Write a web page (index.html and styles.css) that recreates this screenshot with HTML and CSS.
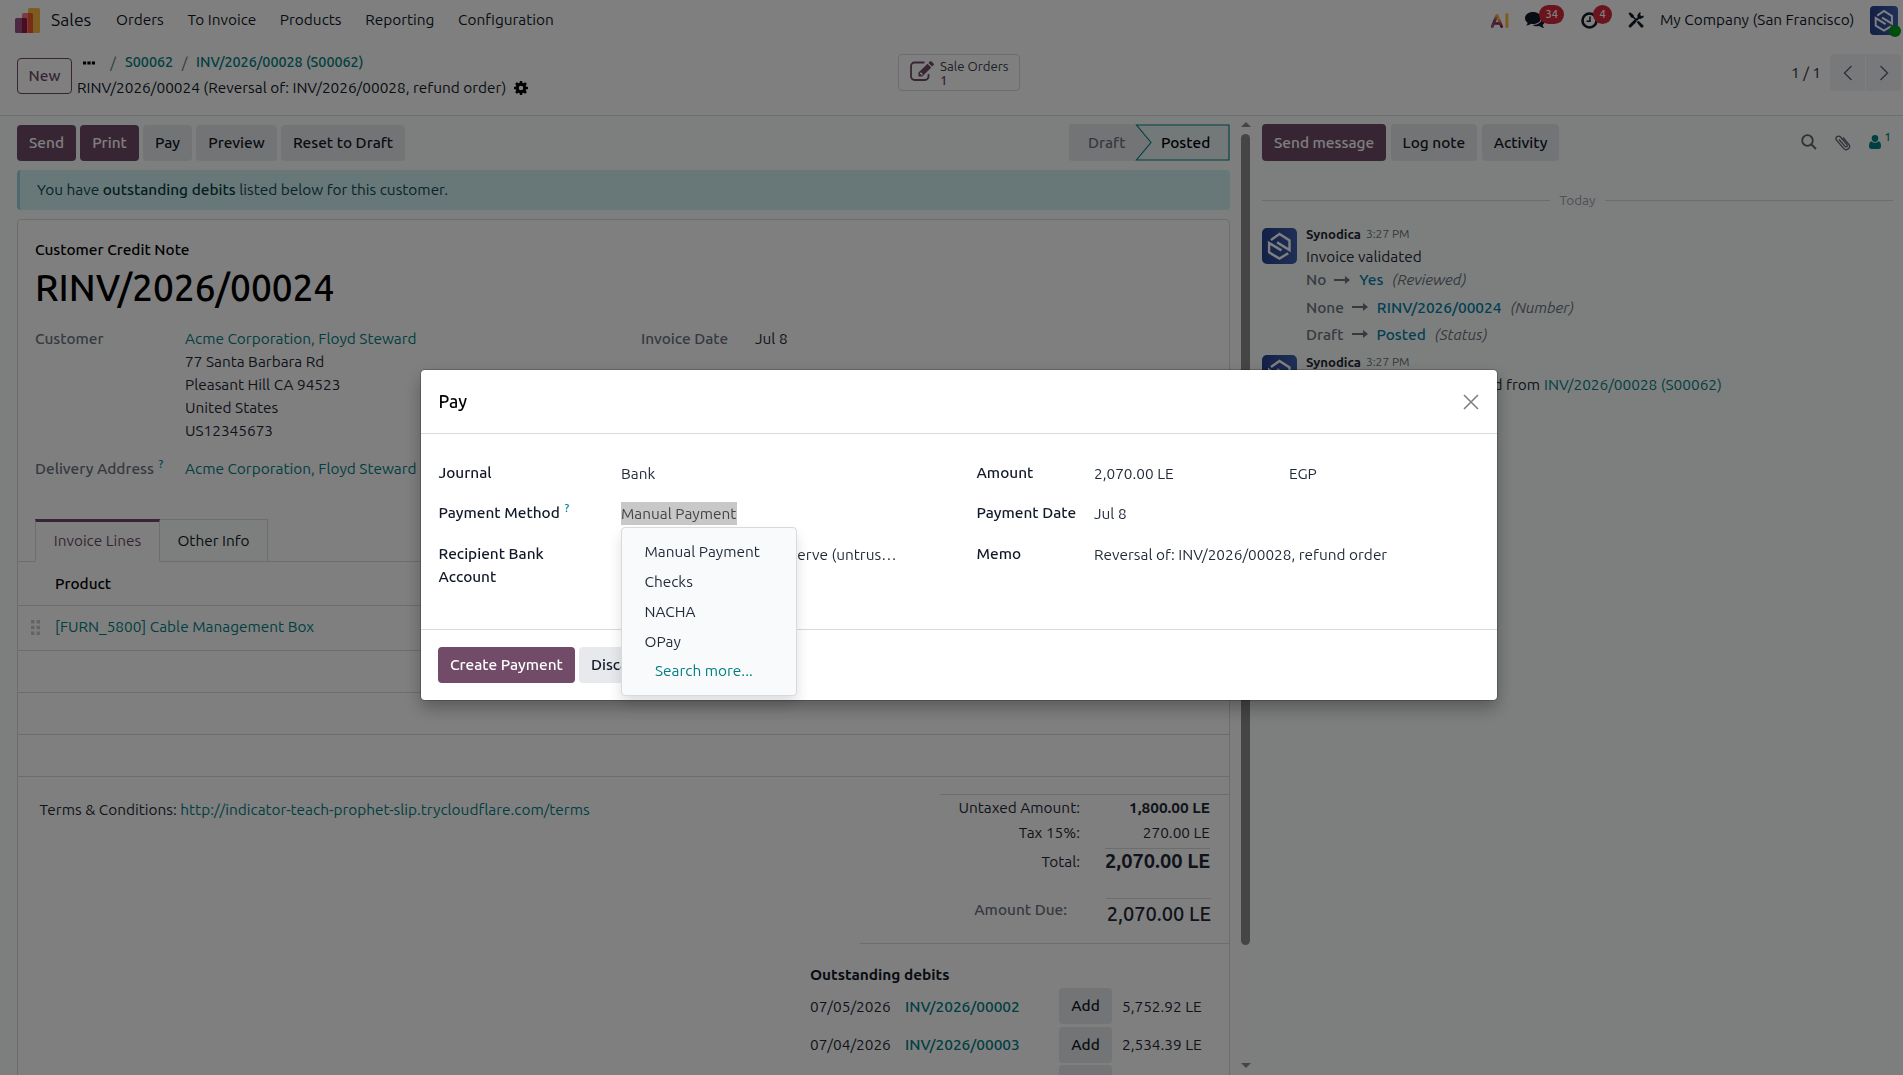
FILE: index.html
```html
<!DOCTYPE html>
<html lang="en">
<head>
<meta charset="utf-8">
<title>Sales - RINV/2026/00024</title>
<link rel="stylesheet" href="styles.css">
</head>
<body>
<svg class="defs" width="0" height="0">
  <defs>
    <linearGradient id="avatar-bg" x1="0" y1="0" x2="1" y2="0"><stop offset="0" stop-color="#26408e"/><stop offset="1" stop-color="#3f5fae"/></linearGradient>
    <linearGradient id="ai-left" x1="0" y1="1" x2="0" y2="0"><stop offset="0" stop-color="#985184"/><stop offset=".55" stop-color="#8c3a6c"/><stop offset="1" stop-color="#fbb945"/></linearGradient>
    <linearGradient id="ai-right" x1="0" y1="1" x2="0" y2="0"><stop offset="0" stop-color="#8e1d5a"/><stop offset=".4" stop-color="#c9603c"/><stop offset=".7" stop-color="#fbb945"/></linearGradient>
    <symbol id="avatar" viewBox="0 0 36 36" preserveAspectRatio="none">
      <rect width="36" height="36" rx="5" fill="url(#avatar-bg)"/>
      <g fill="none" stroke="#fff" stroke-width="2.500">
        <path d="M9.200 12 18 6 28.300 12.500V22L15.500 14.400"/>
        <path d="M27 25.200 18 30.600 7.300 24.400V15L20 22.400"/>
      </g>
    </symbol>
    <symbol id="arrow" viewBox="0 0 16 10"><path d="M0 4h11V1l5 4-5 4V6H0z"/></symbol>
  </defs>
</svg>

<header class="navbar">
  <svg class="logo" viewBox="0 0 25 25"><rect x="13" y="0" width="12" height="25" rx="1.6" fill="#fbb945"/><rect x="7" y="5" width="11" height="20" rx="1.6" fill="#f9787a"/><path d="M13 5h3.4Q18 5 18 6.6V25h-5z" fill="#f0562a"/><rect x="0" y="10" width="12" height="15" rx="1.6" fill="#985184"/><path d="M7 10h3.4Q12 10 12 11.600V25H7z" fill="#8e1d46"/></svg>
  <span class="app">Sales</span>
  <nav class="menu"><a>Orders</a><a>To Invoice</a><a>Products</a><a>Reporting</a><a>Configuration</a></nav>
  <div class="systray">
    <svg class="ai" viewBox="0 0 19 17"><g fill="none" stroke-width="3" stroke-linecap="round"><path d="M5 11.500h5" stroke="#7d2a5c" stroke-width="2.400"/><path d="M7.200 3.500 11.600 14.500" stroke="url(#ai-right)"/><path d="M2.300 14.500 6.800 3.500" stroke="url(#ai-left)"/><path d="M16.900 2.500v12" stroke="#fbb945"/></g></svg>
    <span class="tray chat"><svg viewBox="0 0 20 17"><path d="M8 0c4.600 0 8 2.600 8 6s-3.400 6-8 6c-.8 0-1.500 0-2.200-.2C4.600 12.800 3.200 13.400 1 13.500c1-.9 1.500-1.800 1.600-2.800C1 9.600 0 7.900 0 6c0-3.400 3.600-6 8-6z"/><path d="M17.300 4.500C19 5.600 20 7 20 8.800c0 1.700-.9 3.200-2.400 4.200.2 1.100.7 2 1.700 3-2.200-.1-3.700-.8-4.900-1.900-2.700.5-5.200 0-7-1.100 5.500.2 10-2.700 9.900-8.500z"/></svg><b class="badge">34</b></span>
    <span class="tray clock"><svg viewBox="0 0 17 17"><circle cx="8.500" cy="8.500" r="7" fill="none" stroke="#111827" stroke-width="2.600"/><path d="M9 4.500V9.300H5.600" fill="none" stroke="#111827" stroke-width="1.500"/></svg><b class="badge">4</b></span>
    <svg class="tools" viewBox="0 0 16 16"><path d="M2.200 14 7 9.200" stroke="#111827" stroke-width="3" stroke-linecap="round"/><path d="M8 8.200 11 5.500" stroke="#111827" stroke-width="2.200"/><path d="M11.200 0.600 9.300 3.400l.6 2.700 2.400.8 3.100-1.500.4-2-2.300.8-1.400-1.400.8-2.300z"/><path d="M.5 1.600 2 .2l3.600 2.700.4 1.900 2.600 2.500-1 1L5 5.900l-1.900-.5z"/><path d="M8.800 10.200l1.600-1.500 4.900 4.500c.8 1.500-1 2.900-2.300 2.200z"/></svg>
    <span class="company">My Company (San Francisco)</span>
    <span class="me"><svg><use href="#avatar"/></svg><i></i></span>
  </div>
</header>

<section class="panel">
  <button class="btn outline">New</button>
  <div class="crumbs">
    <div class="crumb-top"><svg class="dots" viewBox="0 0 12 4"><path d="M0 .5h3.200v3H0zM4.400 .5h3.200v3H4.400zM8.800 .5H12v3H8.800z"/></svg><i>/</i><a>S00062</a><i class="next">/</i><a>INV/2026/00028 (S00062)</a></div>
    <div class="crumb-now"><span>RINV/2026/00024 (Reversal of: INV/2026/00028, refund order)</span>
      <svg viewBox="0 0 14 14"><path fill-rule="evenodd" d="M5.900 0h2.200l.4 1.900 1 .4L11.200 1.200l1.600 1.600-1.100 1.700.4 1 1.900.4v2.200l-1.900.4-.4 1 1.100 1.700-1.600 1.600-1.700-1.100-1 .4-.4 1.900H5.900l-.4-1.900-1-.4-1.700 1.100-1.600-1.600 1.100-1.700-.4-1L0 8.100V5.900l1.900-.4.4-1L1.200 2.800l1.600-1.600 1.700 1.100 1-.4zM7 4.700a2.300 2.300 0 1 0 0 4.600 2.300 2.300 0 0 0 0-4.600z"/></svg></div>
  </div>
  <div class="stat">
    <svg viewBox="0 0 24 20"><path d="M14.500 1.500H4.500a3.500 3.500 0 0 0-3.500 3.500v10.500A3.500 3.500 0 0 0 4.500 19H15a3.500 3.500 0 0 0 3.500-3.500V13" fill="none" stroke="#714b67" stroke-width="1.800"/><path fill-rule="evenodd" d="M8.500 11.500 17.500 2.800l3.800 3.700-9 8.900H8.500zM10 12v1.100h1.100v1.100h.9l1-.9-2.100-2.100z" fill="#714b67"/><path d="M18.400 2 19.800.6q.9-.9 1.800 0l1.900 1.900q.8.900 0 1.700l-1.400 1.400z" fill="#714b67"/></svg>
    <div class="stat-text"><span>Sale Orders</span><b>1</b></div>
  </div>
  <div class="pager"><span>1 / 1</span>
    <div class="pg"><svg viewBox="0 0 10 16"><path d="M8.500 1 1.500 8l7 7"/></svg></div><div class="pg"><svg viewBox="0 0 10 16"><path d="M1.500 1l7 7-7 7"/></svg></div>
  </div>
</section>

<main class="content">
  <div class="form">
    <div class="statusbar">
      <button class="btn primary">Send</button><button class="btn primary">Print</button><button class="btn">Pay</button><button class="btn">Preview</button><button class="btn">Reset to Draft</button>
      <div class="steps">
        <svg viewBox="0 0 161 37"><path d="M3 0h65l15 18.500L68 37H3a3 3 0 0 1-3-3V3a3 3 0 0 1 3-3z" fill="#e7e9ed"/><path d="M67.500 1H160v35H67.500L82 18.500z" fill="#e6f2f3" stroke="#017e84" stroke-width="1.100"/></svg>
        <span class="draft">Draft</span><span class="posted">Posted</span>
      </div>
    </div>
    <div class="alert">You have <b>outstanding debits</b> listed below for this customer.</div>
    <article class="sheet">
      <div class="doc-type">Customer Credit Note</div>
      <h1>RINV/2026/00024</h1>
      <div class="groups">
        <div class="row cust"><label>Customer</label><div><a>Acme Corporation, Floyd Steward</a><p>77 Santa Barbara Rd</p><p>Pleasant Hill CA 94523</p><p>United States</p><p>US12345673</p></div></div>
        <div class="row date"><label>Invoice Date</label><div>Jul 8</div></div>
      </div>
      <div class="row deliv"><label>Delivery Address <sup>?</sup></label><a>Acme Corporation, Floyd Steward</a></div>
      <div class="tabs"><span class="tab on">Invoice Lines</span><span class="tab">Other Info</span></div>
      <div class="lines">
        <div class="line head">Product</div>
        <div class="line item"><svg viewBox="0 0 9 15"><path d="M0 0h3.500v3.500H0zM5.500 0H9v3.500H5.500zM0 5.700h3.500v3.500H0zM5.500 5.700H9v3.500H5.500zM0 11.400h3.500v3.500H0zM5.500 11.400H9v3.500H5.500z"/></svg><a>[FURN_5800] Cable Management Box</a></div>
        <div class="line"></div><div class="line"></div><div class="line"></div>
      </div>
      <div class="bottom">
        <p class="terms">Terms &amp; Conditions: <a>http://indicator-teach-prophet-slip.trycloudflare.com/terms</a></p>
        <div class="totals">
          <div class="t"><span>Untaxed Amount:</span><b>1,800.00 LE</b></div>
          <div class="t tax"><span>Tax 15%:</span><em>270.00 LE</em></div>
          <div class="t grand"><span>Total:</span><b>2,070.00 LE</b></div>
          <div class="t due"><span>Amount Due:</span><b>2,070.00 LE</b></div>
        </div>
      </div>
      <div class="debits">
        <h2>Outstanding debits</h2>
        <div class="debit"><span>07/05/2026</span><a>INV/2026/00002</a><button class="btn">Add</button><span>5,752.92 LE</span></div>
        <div class="debit"><span>07/04/2026</span><a>INV/2026/00003</a><button class="btn">Add</button><span>2,534.39 LE</span></div>
        <div class="debit"><span></span><a></a><button class="btn"></button><span></span></div>
      </div>
    </article>
  </div>
  <div class="scroll"><i class="up"></i><i class="thumb"></i><i class="down"></i></div>
  <aside class="chatter">
    <div class="chat-top">
      <button class="btn primary">Send message</button><button class="btn">Log note</button><button class="btn">Activity</button>
      <div class="chat-icons">
        <svg class="i-search" viewBox="0 0 16 16"><circle cx="6.500" cy="6.500" r="5.300"/><path d="M10.500 10.500 15 15"/></svg>
        <svg class="i-clip" viewBox="0 0 17 17"><path d="M5 5.500 11 12.400a1.300 1.300 0 0 0 2-1.800L6.500 3A2.600 2.600 0 0 0 2.300 6L9.800 14.600a3.300 3.300 0 0 0 5-4.300L9 3.500"/></svg>
        <svg class="i-user" viewBox="0 0 12 14"><path d="M6 0a3.300 3.300 0 0 1 3.300 3.400C9.300 5.300 7.800 7 6 7S2.700 5.300 2.700 3.400A3.300 3.300 0 0 1 6 0zM2.700 6.300C3.600 7.300 4.700 7.800 6 7.800s2.400-.5 3.300-1.500C11.300 6.500 12 8.500 12 11c0 1.700-1 3-2.500 3h-7C1 14 0 12.700 0 11c0-2.500.7-4.500 2.700-4.700z"/></svg><span class="followers">1</span>
      </div>
    </div>
    <div class="day"><span>Today</span></div>
    <div class="msg first">
      <svg class="avatar"><use href="#avatar"/></svg>
      <div class="msg-body">
        <div class="who"><b>Synodica</b><span>3:27 PM</span></div>
        <p class="txt">Invoice validated</p>
        <div class="track t1"><span>No</span><svg><use href="#arrow"/></svg><b>Yes</b><em>(Reviewed)</em></div>
        <div class="track t2"><span>None</span><svg><use href="#arrow"/></svg><b>RINV/2026/00024</b><em>(Number)</em></div>
        <div class="track t3"><span>Draft</span><svg><use href="#arrow"/></svg><b>Posted</b><em>(Status)</em></div>
      </div>
    </div>
    <div class="msg">
      <svg class="avatar"><use href="#avatar"/></svg>
      <div class="msg-body">
        <div class="who"><b>Synodica</b><span>3:27 PM</span></div>
        <p class="txt made"><span>This entry has been reversed from</span><a>INV/2026/00028 (S00062)</a></p>
      </div>
    </div>
  </aside>
</main>

<div class="backdrop">
  <div class="modal" role="dialog">
    <div class="m-head"><span>Pay</span><svg viewBox="0 0 16 16"><path d="M1 1l14 14M15 1 1 15"/></svg></div>
    <div class="m-body">
      <div class="m-col">
        <div class="f"><label>Journal</label><span>Bank</span></div>
        <div class="f"><label>Payment Method <sup>?</sup></label>
          <div class="select"><span class="selected">Manual Payment</span>
            <div class="dropdown"><span>Manual Payment</span><span>Checks</span><span>NACHA</span><span>OPay</span><a>Search more...</a></div>
          </div></div>
        <div class="f"><label>Recipient Bank Account</label><span class="bank">Reserve (untrus…</span></div>
      </div>
      <div class="m-col right">
        <div class="f"><label>Amount</label><span class="amount">2,070.00 LE</span><span>EGP</span></div>
        <div class="f"><label>Payment Date</label><span>Jul 8</span></div>
        <div class="f"><label>Memo</label><span>Reversal of: INV/2026/00028, refund order</span></div>
      </div>
    </div>
    <div class="m-foot"><button class="btn primary">Create Payment</button><button class="btn">Discard</button></div>
  </div>
</div>
</body>
</html>
```
FILE: styles.css
```css
* { box-sizing: border-box; }
body {
  margin: 0; width: 1903px; height: 1075px; overflow: hidden; background: #fff; color: #1f2937;
  font: 15.4px/23px Ubuntu, "Noto Sans", sans-serif;
}
p, h1, h2 { margin: 0; font-weight: 400; }
a { color: #017e84; }
i, em { font-style: normal; }
svg { flex: none; display: block; }
.defs { position: absolute; }
b { font-weight: 500; }

.btn {
  height: 36px; padding: 0 12px; border: 0; border-radius: 4px; background: #e7e9ed; color: #111827;
  font: 500 15.4px/34px Ubuntu, "Noto Sans", sans-serif; flex: none; white-space: nowrap;
}
.btn.primary { background: #714b67; color: #fff; }
.btn.outline { background: none; border: 1px solid #714b67; color: #714b67; }

/* top bar */
.navbar { display: flex; align-items: center; height: 40px; padding: 0 5px 0 15px; color: #111827; }
.logo { width: 25px; height: 25px; }
.app { width: 65px; padding-left: 11px; font-size: 17.6px; margin-top: -1px; }
.menu { display: flex; margin-top: -1px; }
.menu a { color: inherit; padding: 0 11.8px; }
.menu a:first-child { padding-left: 11px; }
.systray { display: flex; align-items: center; margin-left: auto; }
.ai { width: 19px; height: 17px; margin-right: 16px; }
.tray { position: relative; }
.tray.chat { width: 56px; }
.tray.clock { width: 47px; }
.tray svg { height: 17px; fill: #111827; }
.chat svg { width: 20px; }
.clock svg { width: 17px; }
.badge {
  position: absolute; top: -7px; left: 14px; min-width: 19px; height: 19px; padding: 0 6.5px; border-radius: 10px;
  background: #d5293a; color: #fff; font-size: 11px; line-height: 18px;
}
.clock .badge { left: 12px; }
.tools { width: 16px; height: 16px; fill: #111827; }
.company { width: 226px; padding-left: 16px; white-space: nowrap; margin-top: -1px; }
.me { position: relative; width: 28px; height: 29px; }
.me svg { width: 28px; height: 29px; }
.me i { position: absolute; right: -3px; bottom: -2px; width: 12px; height: 12px; border-radius: 50%; background: #009a1c; }

/* control panel */
.panel { display: flex; height: 76px; padding: 0 2px 0 17px; border-bottom: 1px solid #d8dadd; }
.panel .outline { width: 55px; margin: 18px 5px 0 0; padding: 0; }
.crumbs { width: 821px; padding-top: 10px; color: #111827; }
.crumb-top { display: flex; align-items: center; height: 23px; padding-left: 6px; font-size: 14.3px; font-weight: 500; }
.crumb-top a, .crumb-top i { margin-top: 1px; }
.crumb-top i { width: 24px; text-align: center; color: #6b7280; font-size: 15.4px; font-weight: 400; }
.crumb-top .next { width: 23px; }
.dots { width: 12px; height: 4px; margin: 3px 6px 0 0; }
.crumb-now { display: flex; align-items: center; gap: 8px; height: 28px; }
.crumb-now svg { width: 14px; height: 14px; margin-top: 1px; }
.stat { display: flex; width: 122px; height: 37px; margin-top: 14px; padding: 6px 0 0 11px; border: 1px solid #d8dadd; border-radius: 4px; }
.stat svg { width: 24px; height: 20px; }
.stat-text { display: flex; flex-direction: column; padding-left: 6px; font-size: 13.2px; line-height: 14px; color: #374151; margin-top: -2px; }
.stat-text b { color: #714b67; }
.pager { display: flex; margin: 14px 0 0 auto; line-height: 37px; }
.pager span { margin-right: 8px; }
.pg { display: grid; place-items: center; width: 35px; height: 37px; margin-left: 1px; background: #f1f3f6; border-radius: 4px 0 0 4px; }
.pg + .pg { border-radius: 0 4px 4px 0; }
.pg svg { width: 10px; height: 16px; fill: none; stroke: #5c6470; stroke-width: 1.4; }

/* form */
.content { display: flex; height: 959px; background: #f9fefb; overflow: hidden; }
.form { width: 1237px; padding: 8px 7px 0 17px; }
.statusbar { display: flex; gap: 4.2px; height: 46px; padding-top: 1px; }
.steps { position: relative; display: flex; width: 161px; height: 37px; margin: -1px 0 0 auto; font-weight: 500; line-height: 37px; }
.steps svg { position: absolute; inset: 0; width: 161px; height: 37px; }
.steps span { position: relative; }
.draft { width: 92px; padding-left: 19px; color: #6b7280; }
.posted { color: #000; }
.alert { height: 40px; padding: 0 17px; line-height: 39px; border-left: 3px solid #9bd5dd; border-radius: 4px; background: #d1eeee; color: #0c4a52; }
.alert b { color: #063c43; }
.sheet { height: 900px; margin-top: 9px; border: 1px solid #d8dadd; border-radius: 4px; background: #fff; }
.doc-type { padding: 18px 0 0 17px; font-weight: 500; color: #000; }
h1 { padding-left: 17px; height: 66px; font-size: 37px; line-height: 53px; font-weight: 500; color: #000; }
.groups { display: flex; }
.row { display: flex; padding-left: 17px; }
.row label { width: 150px; font-weight: 500; color: #6b7280; }
.cust { width: 606px; height: 130px; }
.row.date label { width: 114px; }
sup { font-size: 11.5px; font-weight: 500; line-height: 0; vertical-align: 6px; margin-left: 1px; color: #0180a5; }
.tabs { display: flex; height: 43px; margin-top: 39px; padding-left: 17px; border-bottom: 1px solid #d8dadd; }
.tab { height: 43px; width: 108px; border: 1px solid #d8dadd; border-left: 0; background: #f9fefb; text-align: center; line-height: 42px; color: #111827; }
.tab.on { width: 125px; border-top: 3px solid #714b67; border-left: 1px solid #d8dadd; border-bottom-color: #fff; background: #fff; color: #714b67; line-height: 38px; }
.line { display: flex; align-items: center; height: 42px; border-bottom: 1px solid #d8dadd; }
.head { height: 44px; padding-left: 37px; font-weight: 500; color: #000; }
.item { height: 45px; padding: 0 0 2px 13px; }
.item svg { width: 9px; height: 15px; margin-right: 15px; fill: #c5c9ce; }
.item a { margin-top: -1px; }
.bottom { display: flex; justify-content: space-between; padding-top: 17px; }
.terms { padding: 4px 0 0 21.5px; }
.totals { width: 289px; height: 149px; border-top: 1px solid #d8dadd; }
.t { display: flex; justify-content: flex-end; height: 25px; line-height: 26px; padding-right: 19px; }
.t span { margin-right: 25px; }
.t b, .t em { width: 105px; text-align: right; }
.t b { font-weight: 600; color: #1f2937; }
.tax { height: 28px; }
.grand b, .due b { border-top: 1px solid #d8dadd; font-size: 20px; white-space: nowrap; }
.grand { height: 50px; }
.grand span { line-height: 27px; }
.grand b { line-height: 24px; }
.due span { margin-right: 39px; font-weight: 500; color: #6b7280; line-height: 23px; }
.due b { font-weight: 500; line-height: 29px; margin-right: -1px; height: 40px; }
.debits { margin-left: 842px; border-top: 1px solid #d8dadd; }
.debits h2 { padding: 19px 0 1px; margin-left: -50px; font-size: 15.4px; font-weight: 600; color: #111827; }
.debit { display: flex; align-items: center; height: 38.5px; margin-left: -50px; }
.debit span:first-child { width: 95px; }
.debit a { width: 154px; font-weight: 500; }
.debit .btn { width: 53px; margin-right: 10px; }

.scroll { width: 17px; display: flex; flex-direction: column; align-items: center; background: #fafcfb; padding-top: 6px; }
.scroll .up { border: 5px solid transparent; border-top: 0; border-bottom-color: #8b8b8b; }
.scroll .thumb { width: 9px; height: 811px; margin-top: 7px; border-radius: 5px; background: #8b8b8b; }
.scroll .down { border: 5px solid transparent; border-bottom: 0; border-top-color: #8b8b8b; margin-top: 118px; }

/* chatter */
.chatter { flex: 1; padding: 8px 10px 0 8px; }
.chat-top { display: flex; gap: 4.5px; }
.chat-top .btn { height: 37px; }
.chat-icons { display: flex; margin: 10px 2px 0 auto; fill: none; stroke: #5b6270; }
.i-search { width: 16px; height: 16px; stroke-width: 1.800; margin-right: 17px; }
.i-clip { width: 17px; height: 17px; stroke-width: 1.300; margin-right: 18px; }
.i-user { width: 12px; height: 14px; fill: #017e84; stroke: none; margin-top: 1px; }
.followers { margin: -4px 0 0 4px; font-size: 11.5px; font-weight: 500; line-height: 14px; color: #017e84; }
.day { display: flex; align-items: center; gap: 9px; height: 20px; margin-top: 29px; font-size: 13.500px; color: #9ca3af; }
.day::before, .day::after { content: ""; flex: 1; height: 1px; background: #d8dadd; }
.msg { display: flex; height: 127px; }
.msg.first { margin-top: 18px; }
.first .msg-body { margin-top: -1px; }
.avatar { width: 35px; height: 36px; margin-right: 9px; }
.who { display: flex; gap: 5px; height: 14px; line-height: 14px; font-size: 13.2px; color: #6b7280; }
.who b { font-weight: 700; color: #1f2937; }
.who span { font-size: 12px; }
.txt { margin-top: 4px; }
.track { display: flex; align-items: center; height: 28px; color: #6b7280; }
.track.t1 { height: 23px; margin-bottom: 2px; }
.track.t3 { margin-top: -1px; }
.track span { font-weight: 500; }
.track svg { width: 16px; height: 10px; margin: 0 9px 0 8px; fill: #6b7280; }
.track b { color: #0180a5; }
.track em { font-style: italic; margin-left: 9px; }
.made { display: flex; }
.made span { width: 234px; margin-right: 4px; white-space: nowrap; display: flex; justify-content: flex-end; }

/* payment dialog */
.backdrop { position: fixed; inset: 0; background: rgba(0, 0, 0, .5); padding: 370px 0 0 421px; }
.modal { display: flex; flex-direction: column; width: 1076px; height: 330px; border-radius: 4px; background: #fff; box-shadow: 0 8px 17px rgba(0, 0, 0, .3), 0 0 0 1px rgba(0, 0, 0, .2); }
.m-head { display: flex; justify-content: space-between; align-items: center; height: 64px; padding: 0 18px 0 17.5px; border-bottom: 1px solid #d8dadd; font-size: 17.600px; font-weight: 500; color: #000; }
.m-head span { margin-top: -1px; }
.m-head svg { width: 16px; height: 16px; stroke: #808080; stroke-width: 1.600; }
.m-body { display: flex; height: 195px; padding: 28px 17.5px 0; }
.m-col { width: 538px; flex: none; }
.f { display: flex; height: 40px; line-height: 24px; }
.f:nth-child(2) { height: 41px; }
.f label { width: 182.5px; padding-right: 50px; margin-top: -1px; font-weight: 500; line-height: 23px; color: #111827; white-space: nowrap; }
.f:last-child label { white-space: normal; }
.right .f label { width: 117.5px; padding: 0; }
.amount { width: 195px; }
.select { position: relative; }
.selected { display: block; width: 116px; height: 23px; background: #c8c8c8; color: #444; white-space: nowrap; }
.bank { width: 275.5px; text-align: right; }
.dropdown { position: absolute; left: 0; top: 25px; width: 176px; height: 169px; padding: 9px 0; border: 1px solid #d8dadd; border-radius: 4px; background: #f9fafc; box-shadow: 0 8px 14px rgba(0, 0, 0, .13); display: flex; flex-direction: column; line-height: 30px; }
.dropdown span { padding-left: 22.5px; color: #1f2937; }
.dropdown a { padding-left: 33px; line-height: 28px; }
.m-foot { display: flex; gap: 4px; height: 71px; padding: 17px; border-top: 1px solid #d8dadd; }
```
